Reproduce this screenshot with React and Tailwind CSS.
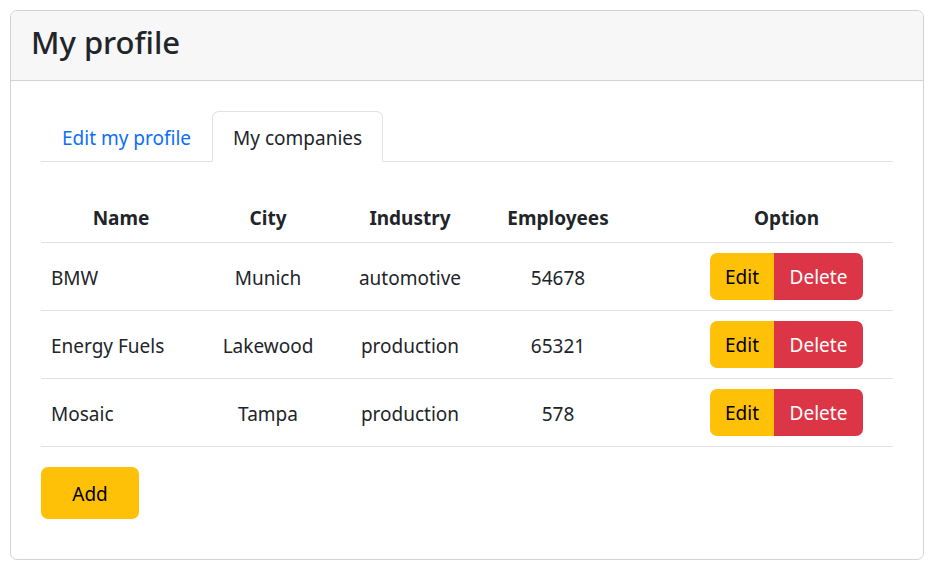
const companies = [
  { name: "BMW", city: "Munich", industry: "automotive", employees: 54678 },
  { name: "Energy Fuels", city: "Lakewood", industry: "production", employees: 65321 },
  { name: "Mosaic", city: "Tampa", industry: "production", employees: 578 },
];

export default function App() {
  return (
    <div className="min-h-[570px] bg-white pt-[10px] pl-[10px] font-['Noto_Sans',sans-serif] text-[#212529]">
      <div className="w-[914px] h-[550px] rounded-[7px] border border-[#d3d3d3] overflow-hidden">
        <div className="h-[70px] bg-[#f7f7f7] border-b border-[#d3d3d3] px-[20px] pt-[10px]">
          <h1 className="text-[31px] leading-[42px] font-medium">My profile</h1>
        </div>

        <div className="px-[30px] pt-[30px]">
          <div className="flex border-b border-[#dee2e6]">
            <button className="h-[50px] px-[20px] pt-[3px] text-[19px] leading-[30px] text-[#0d6efd] border border-transparent -mb-px">
              Edit my profile
            </button>
            <button className="h-[51px] px-[20px] pt-[3px] text-[19px] leading-[30px] text-[#212529] bg-white border border-[#dee2e6] border-b-white rounded-t-[7px] -mb-px">
              My companies
            </button>
          </div>

          <table className="mt-[30px] w-full border-collapse text-[19px]">
            <colgroup>
              <col className="w-[160px]" />
              <col className="w-[134px]" />
              <col className="w-[150px]" />
              <col className="w-[146px]" />
              <col />
            </colgroup>
            <thead>
              <tr className="border-b border-[#dee2e6]">
                <th className="h-[50px] px-[10px] pt-[2px] font-bold text-center">Name</th>
                <th className="px-[10px] pt-[2px] font-bold text-center">City</th>
                <th className="px-[10px] pt-[2px] font-bold text-center">Industry</th>
                <th className="px-[10px] pt-[2px] font-bold text-center">Employees</th>
                <th className="pl-[59px] pr-[10px] pt-[2px] font-bold text-center">Option</th>
              </tr>
            </thead>
            <tbody>
              {companies.map((c) => (
                <tr key={c.name} className="border-b border-[#dee2e6]">
                  <td className="h-[68px] px-[10px] pt-[4px] text-left">{c.name}</td>
                  <td className="px-[10px] pt-[4px] text-center">{c.city}</td>
                  <td className="px-[10px] pt-[4px] text-center">{c.industry}</td>
                  <td className="px-[10px] pt-[4px] text-center">{c.employees}</td>
                  <td className="pl-[59px] pr-[10px]">
                    <div className="flex justify-center">
                      <button className="h-[47px] w-[64px] pt-[3px] bg-[#ffc107] text-[#000] rounded-l-[7px]">Edit</button>
                      <button className="h-[47px] w-[89px] pt-[3px] bg-[#dc3545] text-white rounded-r-[7px]">Delete</button>
                    </div>
                  </td>
                </tr>
              ))}
            </tbody>
          </table>

          <button className="mt-[20px] w-[98px] h-[52px] pt-[3px] bg-[#ffc107] text-[#000] text-[19px] rounded-[7px]">
            Add
          </button>
        </div>
      </div>
    </div>
  );
}
